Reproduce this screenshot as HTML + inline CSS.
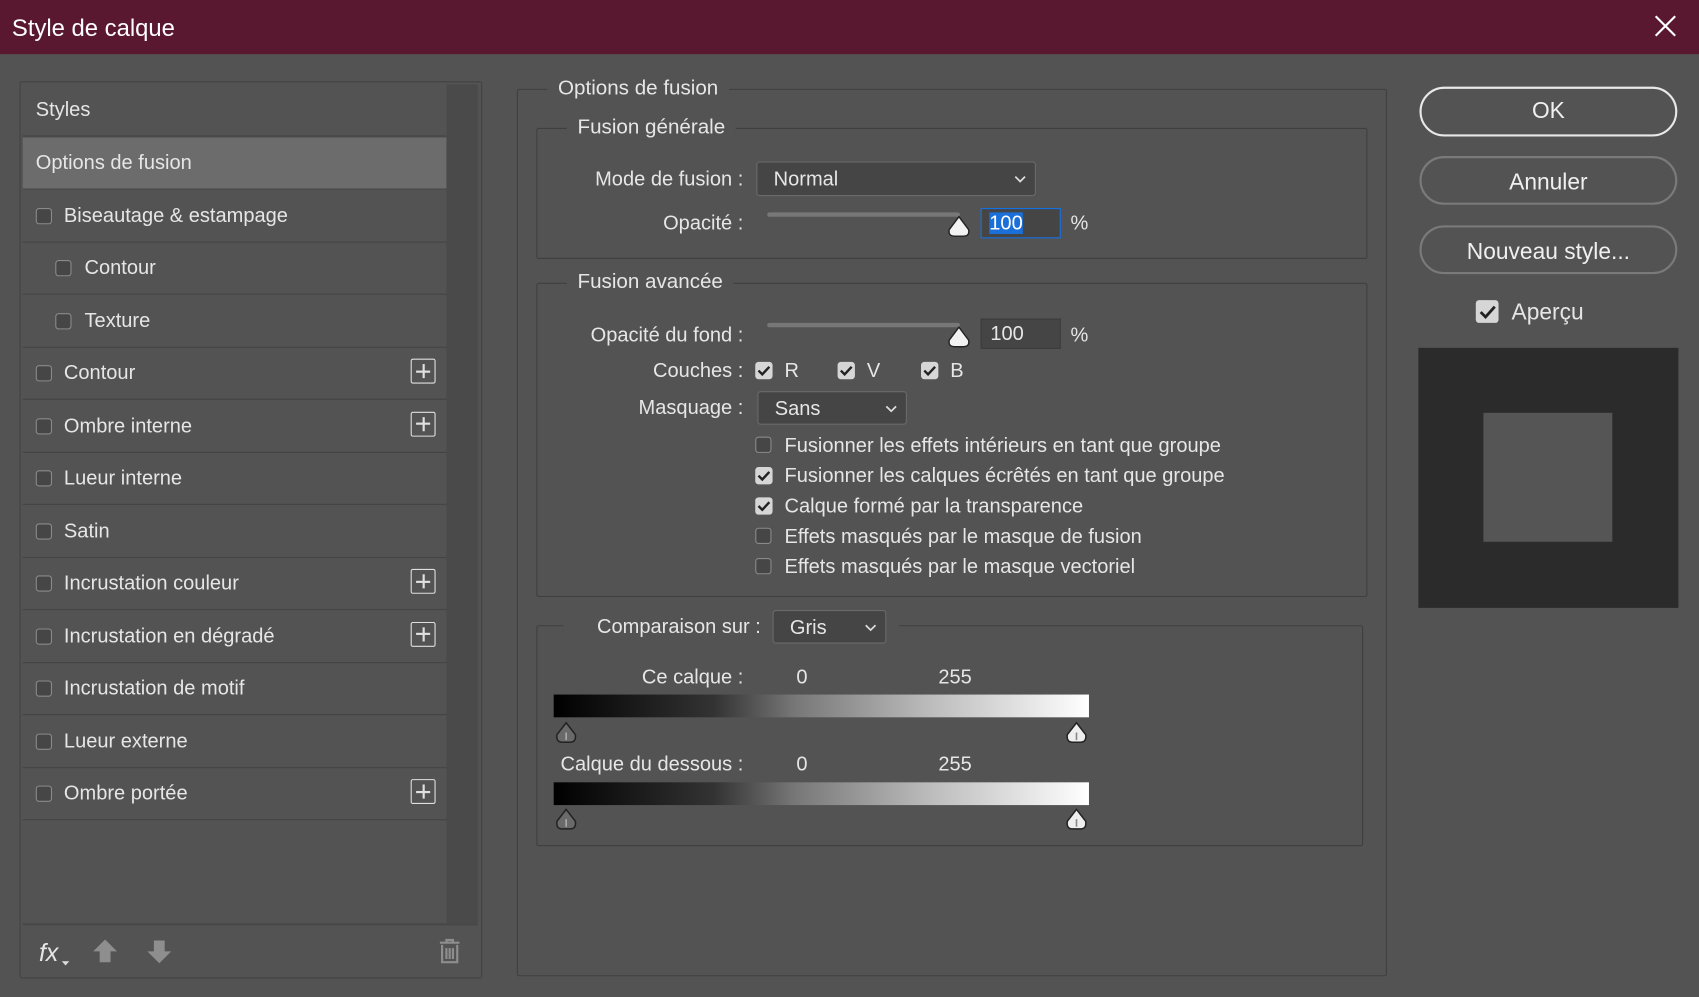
<!DOCTYPE html>
<html><head><meta charset="utf-8"><style>
html,body{margin:0;padding:0;width:1699px;height:997px;overflow:hidden;background:#535353}
#w{position:absolute;left:0;top:0;width:1568px;height:920px;transform:scale(1.08355);transform-origin:0 0;font-family:"Liberation Sans",sans-serif;color:#e6e6e6;font-size:18.5px}
.a{position:absolute}
.t{position:absolute;white-space:nowrap;line-height:20px}
.r{text-align:right}
.cb{position:absolute;width:13px;height:13px;border:1.5px solid #8a8a8a;border-radius:3px;background:#464646}
.ck{position:absolute;width:16px;height:16px;border-radius:3px;background:#d6d6d6}
.ck svg{position:absolute;left:2px;top:3px}
.row{position:absolute;left:21px;width:391px;height:47px;border-bottom:1.5px solid #444}
.plus{position:absolute;left:358px;top:10px;width:21px;height:21px;border:1.5px solid #e0e0e0;border-radius:2px}
.plus:before{content:"";position:absolute;left:4px;top:9.5px;width:13px;height:2px;background:#e0e0e0}
.plus:after{content:"";position:absolute;left:9.5px;top:4px;width:2px;height:13px;background:#e0e0e0}
.box{position:absolute;border:1.5px solid #3f3f3f;border-radius:2px}
.leg{position:absolute;background:#535353;padding:0 10px;white-space:nowrap;font-size:19px}
.dd{position:absolute;background:#454545;border:1.5px solid #6a6a6a;border-radius:3px}
.dd span{position:absolute;left:15px;top:4px}
.dd svg{position:absolute;right:8px;top:12px}
.inp{position:absolute;background:#454545;border:1.5px solid #3c3c3c}
.btn{position:absolute;left:1310px;width:234px;border:2px solid #7a7a7a;border-radius:24px;text-align:center;font-size:21px;color:#f0f0f0}
</style></head><body><div id="w">
<div class="a" style="left:0;top:0;width:1568px;height:50px;background:#5a1730"></div>
<div class="t" style="left:11px;top:14px;font-size:22px;line-height:24px;color:#fff">Style de calque</div>
<svg class="a" style="left:1527px;top:14px" width="20" height="20"><path d="M1 1L19 19M19 1L1 19" stroke="#fff" stroke-width="2"/></svg>

<div class="box" style="left:18px;top:75px;width:425px;height:826px;border-color:#434343"></div>
<div class="a" style="left:21px;top:78px;width:391px;height:774px;background:#535353"></div>
<div class="a" style="left:412px;top:78px;width:29px;height:774px;background:#4a4a4a"></div>
<div class="a" style="left:21px;top:852px;width:420px;height:1.5px;background:#484848"></div>
<div class="row" style="top:78px"><div class="t" style="left:12px;top:13px">Styles</div></div>
<div class="row" style="top:127px;background:#6c6c6c"><div class="t" style="left:12px;top:13px">Options de fusion</div></div>
<div class="row" style="top:175.5px"><div class="cb" style="left:12px;top:16px"></div><div class="t" style="left:38px;top:13px">Biseautage &amp; estampage</div></div>
<div class="row" style="top:224px"><div class="cb" style="left:30px;top:16px"></div><div class="t" style="left:57px;top:13px">Contour</div></div>
<div class="row" style="top:272.5px"><div class="cb" style="left:30px;top:16px"></div><div class="t" style="left:57px;top:13px">Texture</div></div>
<div class="row" style="top:321px"><div class="cb" style="left:12px;top:16px"></div><div class="t" style="left:38px;top:13px">Contour</div><div class="plus"></div></div>
<div class="row" style="top:369.5px"><div class="cb" style="left:12px;top:16px"></div><div class="t" style="left:38px;top:13px">Ombre interne</div><div class="plus"></div></div>
<div class="row" style="top:418px"><div class="cb" style="left:12px;top:16px"></div><div class="t" style="left:38px;top:13px">Lueur interne</div></div>
<div class="row" style="top:466.5px"><div class="cb" style="left:12px;top:16px"></div><div class="t" style="left:38px;top:13px">Satin</div></div>
<div class="row" style="top:515px"><div class="cb" style="left:12px;top:16px"></div><div class="t" style="left:38px;top:13px">Incrustation couleur</div><div class="plus"></div></div>
<div class="row" style="top:563.5px"><div class="cb" style="left:12px;top:16px"></div><div class="t" style="left:38px;top:13px">Incrustation en dégradé</div><div class="plus"></div></div>
<div class="row" style="top:612px"><div class="cb" style="left:12px;top:16px"></div><div class="t" style="left:38px;top:13px">Incrustation de motif</div></div>
<div class="row" style="top:660.5px"><div class="cb" style="left:12px;top:16px"></div><div class="t" style="left:38px;top:13px">Lueur externe</div></div>
<div class="row" style="top:709px"><div class="cb" style="left:12px;top:16px"></div><div class="t" style="left:38px;top:13px">Ombre portée</div><div class="plus"></div></div>
<div class="t" style="left:36px;top:866px;font-size:23px;font-style:italic;line-height:26px">fx</div>
<svg class="a" style="left:57px;top:887px" width="8" height="5"><path d="M0 0H7L3.5 4Z" fill="#ddd"/></svg>
<svg class="a" style="left:85px;top:866px" width="24" height="24"><path d="M12 1L23 12H17V22H7V12H1Z" fill="#8e8e8e"/></svg>
<svg class="a" style="left:135px;top:866px" width="24" height="24"><path d="M12 23L23 12H17V2H7V12H1Z" fill="#8e8e8e"/></svg>
<svg class="a" style="left:404px;top:866px" width="22" height="24"><path d="M2 4H20M8 4V1.5H14V4M4 6V22H18V6M8 9V19M11 9V19M14 9V19" stroke="#8e8e8e" stroke-width="2" fill="none"/></svg>

<div class="box" style="left:477px;top:82px;width:801px;height:817px"></div>
<div class="leg" style="left:505px;top:71px">Options de fusion</div>
<div class="box" style="left:495px;top:118px;width:765px;height:119px"></div>
<div class="leg" style="left:523px;top:107px">Fusion générale</div>
<div class="t r" style="left:486px;top:155px;width:200px">Mode de fusion :</div>
<div class="dd" style="left:698px;top:149px;width:256px;height:30px"><span>Normal</span><svg width="11" height="7"><path d="M1 1L5.5 5.5L10 1" stroke="#ddd" stroke-width="1.6" fill="none"/></svg></div>
<div class="t r" style="left:486px;top:196px;width:200px">Opacité :</div>
<div class="a" style="left:708px;top:196px;width:178px;height:4px;background:#777;border-radius:2px"></div>
<svg class="a" style="left:874px;top:199px" width="22" height="21"><path d="M11 1L20 13Q21 19 15 19H7Q1 19 2 13Z" fill="#f2f2f2" stroke="#222" stroke-width="1.3"/></svg>
<div class="inp" style="left:905px;top:192px;width:72px;height:26px;border:1.5px solid #1473e6"><span style="position:absolute;left:7px;top:3px;background:#1a6fd8;color:#fff;line-height:20px">100</span></div>
<div class="t" style="left:988px;top:196px">%</div>

<div class="box" style="left:495px;top:261px;width:765px;height:288px"></div>
<div class="leg" style="left:523px;top:250px">Fusion avancée</div>
<div class="t r" style="left:486px;top:299px;width:200px">Opacité du fond :</div>
<div class="a" style="left:708px;top:298px;width:178px;height:4px;background:#777;border-radius:2px"></div>
<svg class="a" style="left:874px;top:301px" width="22" height="21"><path d="M11 1L20 13Q21 19 15 19H7Q1 19 2 13Z" fill="#f2f2f2" stroke="#222" stroke-width="1.3"/></svg>
<div class="inp" style="left:905px;top:294px;width:72px;height:26px"><span style="position:absolute;left:8px;top:3px;line-height:20px">100</span></div>
<div class="t" style="left:988px;top:299px">%</div>
<div class="t r" style="left:486px;top:332px;width:200px">Couches :</div>
<div class="ck" style="left:697px;top:334px"><svg width="12" height="10"><path d="M1 5L4.5 8.5L11 1.5" stroke="#222" stroke-width="2.2" fill="none"/></svg></div><div class="t" style="left:724px;top:332px">R</div>
<div class="ck" style="left:773px;top:334px"><svg width="12" height="10"><path d="M1 5L4.5 8.5L11 1.5" stroke="#222" stroke-width="2.2" fill="none"/></svg></div><div class="t" style="left:800px;top:332px">V</div>
<div class="ck" style="left:850px;top:334px"><svg width="12" height="10"><path d="M1 5L4.5 8.5L11 1.5" stroke="#222" stroke-width="2.2" fill="none"/></svg></div><div class="t" style="left:877px;top:332px">B</div>
<div class="t r" style="left:486px;top:366px;width:200px">Masquage :</div>
<div class="dd" style="left:699px;top:361px;width:136px;height:29px"><span>Sans</span><svg width="11" height="7"><path d="M1 1L5.5 5.5L10 1" stroke="#ddd" stroke-width="1.6" fill="none"/></svg></div>
<div class="cb" style="left:697px;top:403px"></div><div class="t" style="left:724px;top:401px">Fusionner les effets intérieurs en tant que groupe</div>
<div class="ck" style="left:697px;top:431px"><svg width="12" height="10"><path d="M1 5L4.5 8.5L11 1.5" stroke="#222" stroke-width="2.2" fill="none"/></svg></div><div class="t" style="left:724px;top:429px">Fusionner les calques écrêtés en tant que groupe</div>
<div class="ck" style="left:697px;top:459px"><svg width="12" height="10"><path d="M1 5L4.5 8.5L11 1.5" stroke="#222" stroke-width="2.2" fill="none"/></svg></div><div class="t" style="left:724px;top:457px">Calque formé par la transparence</div>
<div class="cb" style="left:697px;top:487px"></div><div class="t" style="left:724px;top:485px">Effets masqués par le masque de fusion</div>
<div class="cb" style="left:697px;top:515px"></div><div class="t" style="left:724px;top:513px">Effets masqués par le masque vectoriel</div>

<div class="box" style="left:495px;top:577px;width:761px;height:202px"></div>
<div class="a" style="left:520px;top:560px;width:310px;height:36px;background:#535353"></div>
<div class="t" style="left:551px;top:568px">Comparaison sur :</div>
<div class="dd" style="left:713px;top:563px;width:103px;height:29px"><span>Gris</span><svg width="11" height="7"><path d="M1 1L5.5 5.5L10 1" stroke="#ddd" stroke-width="1.6" fill="none"/></svg></div>
<div class="t r" style="left:486px;top:615px;width:200px">Ce calque :</div>
<div class="t" style="left:735px;top:615px">0</div><div class="t" style="left:866px;top:615px">255</div>
<div class="a" style="left:511px;top:641px;width:494px;height:21px;background:linear-gradient(90deg,#000 0%,#333 30%,#777 45%,#bbb 70%,#fff 100%)"></div>
<svg class="a" style="left:511px;top:666px" width="23" height="21"><path d="M11.5 1L20 12Q21 19 15 19H8Q2 19 3 12Z" fill="#6a6a6a" stroke="#222" stroke-width="1.4"/><path d="M11.5 10V17" stroke="#aaa" stroke-width="1.5"/></svg>
<svg class="a" style="left:982px;top:666px" width="23" height="21"><path d="M11.5 1L20 12Q21 19 15 19H8Q2 19 3 12Z" fill="#eee" stroke="#222" stroke-width="1.4"/><path d="M11.5 10V17" stroke="#888" stroke-width="1.5"/></svg>
<div class="t r" style="left:486px;top:695px;width:200px">Calque du dessous :</div>
<div class="t" style="left:735px;top:695px">0</div><div class="t" style="left:866px;top:695px">255</div>
<div class="a" style="left:511px;top:722px;width:494px;height:21px;background:linear-gradient(90deg,#000 0%,#333 30%,#777 45%,#bbb 70%,#fff 100%)"></div>
<svg class="a" style="left:511px;top:746px" width="23" height="21"><path d="M11.5 1L20 12Q21 19 15 19H8Q2 19 3 12Z" fill="#6a6a6a" stroke="#222" stroke-width="1.4"/><path d="M11.5 10V17" stroke="#aaa" stroke-width="1.5"/></svg>
<svg class="a" style="left:982px;top:746px" width="23" height="21"><path d="M11.5 1L20 12Q21 19 15 19H8Q2 19 3 12Z" fill="#eee" stroke="#222" stroke-width="1.4"/><path d="M11.5 10V17" stroke="#888" stroke-width="1.5"/></svg>

<div class="btn" style="top:80px;height:42px;line-height:42px;border-color:#e8e8e8">OK</div>
<div class="btn" style="top:144px;height:41px;line-height:45px">Annuler</div>
<div class="btn" style="top:208px;height:41px;line-height:45px">Nouveau style...</div>
<div class="ck" style="left:1362px;top:277px;width:21px;height:21px"><svg width="16" height="14" style="left:3px;top:4px"><path d="M1.5 7L6 11.5L14.5 2" stroke="#222" stroke-width="2.6" fill="none"/></svg></div>
<div class="t" style="left:1395px;top:277px;font-size:21px;line-height:24px">Aperçu</div>
<div class="a" style="left:1309px;top:321px;width:240px;height:240px;background:#2b2b2b"></div>
<div class="a" style="left:1369px;top:381px;width:119px;height:119px;background:#555"></div>
</div></body></html>
